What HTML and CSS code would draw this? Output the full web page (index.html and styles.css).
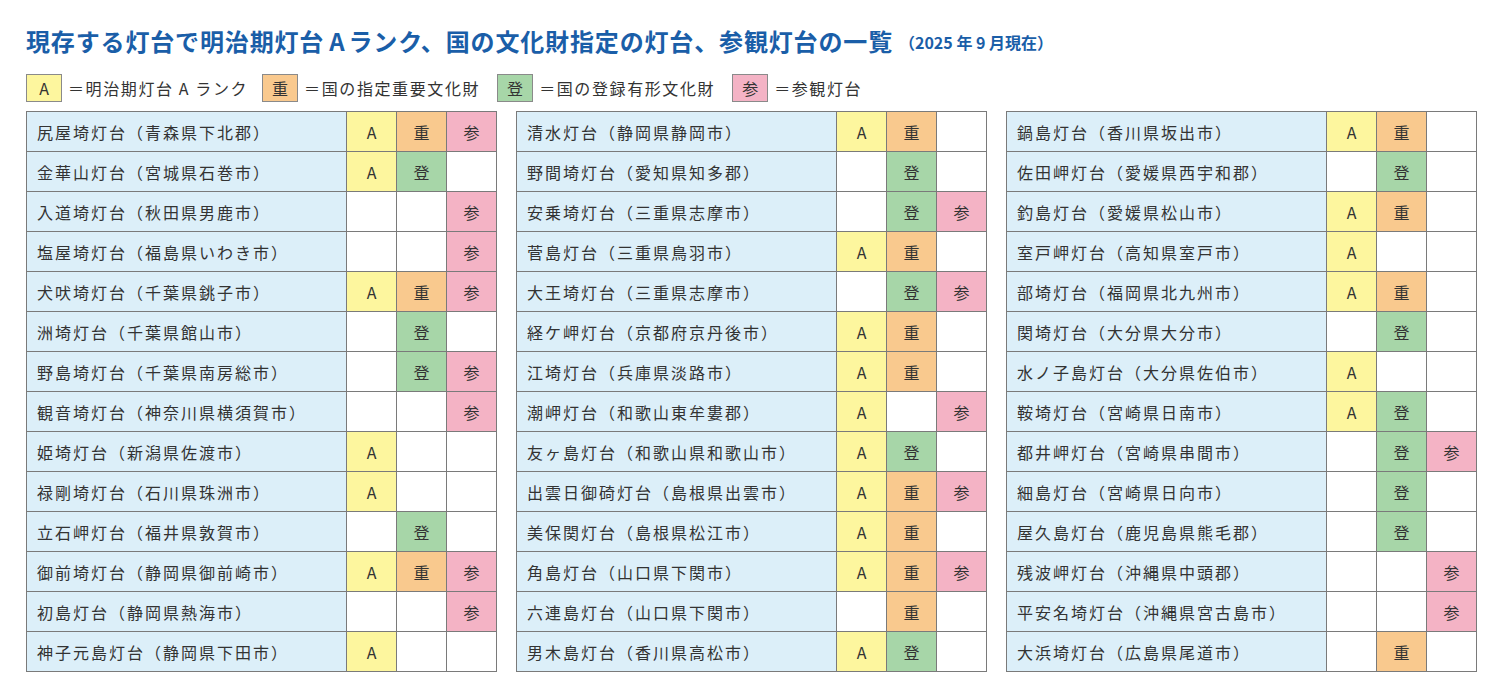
FILE: index.html
```html
<!DOCTYPE html>
<html lang="ja">
<head>
<meta charset="utf-8">
<title>灯台一覧</title>
<link rel="stylesheet" href="styles.css">
</head>
<body>
<div class="page">
  <h1 class="title">現存する灯台で明治期灯台<span class="lat">A</span>ランク、国の文化財指定の灯台、参観灯台の一覧<span class="date">（2025 年 9 月現在）</span></h1>
  <div class="legend">
    <span class="lbox a">A</span><span class="ltext short">＝明治期灯台 A ランク</span>
    <span class="lbox j">重</span><span class="ltext">＝国の指定重要文化財</span>
    <span class="lbox t">登</span><span class="ltext">＝国の登録有形文化財</span>
    <span class="lbox s">参</span><span class="ltext">＝参観灯台</span>
  </div>
  <div class="tables">
    <table class="list">
      <tr><td class="name">尻屋埼灯台（青森県下北郡）</td><td class="a">A</td><td class="j">重</td><td class="s">参</td></tr>
      <tr><td class="name">金華山灯台（宮城県石巻市）</td><td class="a">A</td><td class="t">登</td><td></td></tr>
      <tr><td class="name">入道埼灯台（秋田県男鹿市）</td><td></td><td></td><td class="s">参</td></tr>
      <tr><td class="name">塩屋埼灯台（福島県いわき市）</td><td></td><td></td><td class="s">参</td></tr>
      <tr><td class="name">犬吠埼灯台（千葉県銚子市）</td><td class="a">A</td><td class="j">重</td><td class="s">参</td></tr>
      <tr><td class="name">洲埼灯台（千葉県館山市）</td><td></td><td class="t">登</td><td></td></tr>
      <tr><td class="name">野島埼灯台（千葉県南房総市）</td><td></td><td class="t">登</td><td class="s">参</td></tr>
      <tr><td class="name">観音埼灯台（神奈川県横須賀市）</td><td></td><td></td><td class="s">参</td></tr>
      <tr><td class="name">姫埼灯台（新潟県佐渡市）</td><td class="a">A</td><td></td><td></td></tr>
      <tr><td class="name">禄剛埼灯台（石川県珠洲市）</td><td class="a">A</td><td></td><td></td></tr>
      <tr><td class="name">立石岬灯台（福井県敦賀市）</td><td></td><td class="t">登</td><td></td></tr>
      <tr><td class="name">御前埼灯台（静岡県御前崎市）</td><td class="a">A</td><td class="j">重</td><td class="s">参</td></tr>
      <tr><td class="name">初島灯台（静岡県熱海市）</td><td></td><td></td><td class="s">参</td></tr>
      <tr><td class="name">神子元島灯台（静岡県下田市）</td><td class="a">A</td><td></td><td></td></tr>
    </table>
    <table class="list">
      <tr><td class="name">清水灯台（静岡県静岡市）</td><td class="a">A</td><td class="j">重</td><td></td></tr>
      <tr><td class="name">野間埼灯台（愛知県知多郡）</td><td></td><td class="t">登</td><td></td></tr>
      <tr><td class="name">安乗埼灯台（三重県志摩市）</td><td></td><td class="t">登</td><td class="s">参</td></tr>
      <tr><td class="name">菅島灯台（三重県鳥羽市）</td><td class="a">A</td><td class="j">重</td><td></td></tr>
      <tr><td class="name">大王埼灯台（三重県志摩市）</td><td></td><td class="t">登</td><td class="s">参</td></tr>
      <tr><td class="name">経ケ岬灯台（京都府京丹後市）</td><td class="a">A</td><td class="j">重</td><td></td></tr>
      <tr><td class="name">江埼灯台（兵庫県淡路市）</td><td class="a">A</td><td class="j">重</td><td></td></tr>
      <tr><td class="name">潮岬灯台（和歌山東牟婁郡）</td><td class="a">A</td><td></td><td class="s">参</td></tr>
      <tr><td class="name">友ヶ島灯台（和歌山県和歌山市）</td><td class="a">A</td><td class="t">登</td><td></td></tr>
      <tr><td class="name">出雲日御碕灯台（島根県出雲市）</td><td class="a">A</td><td class="j">重</td><td class="s">参</td></tr>
      <tr><td class="name">美保関灯台（島根県松江市）</td><td class="a">A</td><td class="j">重</td><td></td></tr>
      <tr><td class="name">角島灯台（山口県下関市）</td><td class="a">A</td><td class="j">重</td><td class="s">参</td></tr>
      <tr><td class="name">六連島灯台（山口県下関市）</td><td></td><td class="j">重</td><td></td></tr>
      <tr><td class="name">男木島灯台（香川県高松市）</td><td class="a">A</td><td class="t">登</td><td></td></tr>
    </table>
    <table class="list">
      <tr><td class="name">鍋島灯台（香川県坂出市）</td><td class="a">A</td><td class="j">重</td><td></td></tr>
      <tr><td class="name">佐田岬灯台（愛媛県西宇和郡）</td><td></td><td class="t">登</td><td></td></tr>
      <tr><td class="name">釣島灯台（愛媛県松山市）</td><td class="a">A</td><td class="j">重</td><td></td></tr>
      <tr><td class="name">室戸岬灯台（高知県室戸市）</td><td class="a">A</td><td></td><td></td></tr>
      <tr><td class="name">部埼灯台（福岡県北九州市）</td><td class="a">A</td><td class="j">重</td><td></td></tr>
      <tr><td class="name">関埼灯台（大分県大分市）</td><td></td><td class="t">登</td><td></td></tr>
      <tr><td class="name">水ノ子島灯台（大分県佐伯市）</td><td class="a">A</td><td></td><td></td></tr>
      <tr><td class="name">鞍埼灯台（宮崎県日南市）</td><td class="a">A</td><td class="t">登</td><td></td></tr>
      <tr><td class="name">都井岬灯台（宮崎県串間市）</td><td></td><td class="t">登</td><td class="s">参</td></tr>
      <tr><td class="name">細島灯台（宮崎県日向市）</td><td></td><td class="t">登</td><td></td></tr>
      <tr><td class="name">屋久島灯台（鹿児島県熊毛郡）</td><td></td><td class="t">登</td><td></td></tr>
      <tr><td class="name">残波岬灯台（沖縄県中頭郡）</td><td></td><td></td><td class="s">参</td></tr>
      <tr><td class="name">平安名埼灯台（沖縄県宮古島市）</td><td></td><td></td><td class="s">参</td></tr>
      <tr><td class="name">大浜埼灯台（広島県尾道市）</td><td></td><td class="j">重</td><td></td></tr>
    </table>
  </div>
</div>
</body>
</html>
```
FILE: styles.css
```css
html, body {
  margin: 0;
  padding: 0;
  background: #ffffff;
}
body {
  font-family: "Noto Sans CJK JP", "Noto Sans", sans-serif;
  color: #333333;
}
.page {
  padding: 24px 26px 0 26px;
}
.title {
  margin: 0;
  height: 34px;
  line-height: 34px;
  font-size: 24px;
  font-weight: 700;
  color: #1a5ea8;
  letter-spacing: 0.85px;
  white-space: nowrap;
}
.title .lat {
  padding: 0 3px 0 5px;
}
.title .date {
  font-size: 16px;
  letter-spacing: 0;
  margin-left: 6px;
  vertical-align: 2px;
}
.legend {
  display: flex;
  align-items: center;
  margin-top: 16px;
  height: 28px;
}
.lbox {
  box-sizing: border-box;
  width: 36px;
  height: 28px;
  border: 1px solid #8a8a8a;
  display: flex;
  align-items: center;
  justify-content: center;
  font-size: 16px;
  color: #333;
}
.ltext {
  font-size: 16px;
  letter-spacing: 1.6px;
  margin-left: 6px;
  margin-right: 17px;
}
.ltext.short {
  margin-right: 14px;
}
.tables {
  display: flex;
  gap: 19px;
  margin-top: 9px;
}
.list {
  border-collapse: collapse;
  table-layout: fixed;
  width: 469px;
}
.list td {
  border: 1px solid #7a7a7a;
  height: 39px;
  padding: 0;
  width: 49px;
  text-align: center;
  font-size: 16px;
  color: #333;
  background: #ffffff;
}
.list td.name {
  width: 309px;
  text-align: left;
  padding-left: 10px;
  background: #dceff9;
  letter-spacing: 2px;
  white-space: nowrap;
}
.a { background: #fdf69e; }
.list td.a { background: #fdf69e; }
.j { background: #f9c98e; }
.list td.j { background: #f9c98e; }
.t { background: #a7d6a8; }
.list td.t { background: #a7d6a8; }
.s { background: #f4b3c5; }
.list td.s { background: #f4b3c5; }
```
